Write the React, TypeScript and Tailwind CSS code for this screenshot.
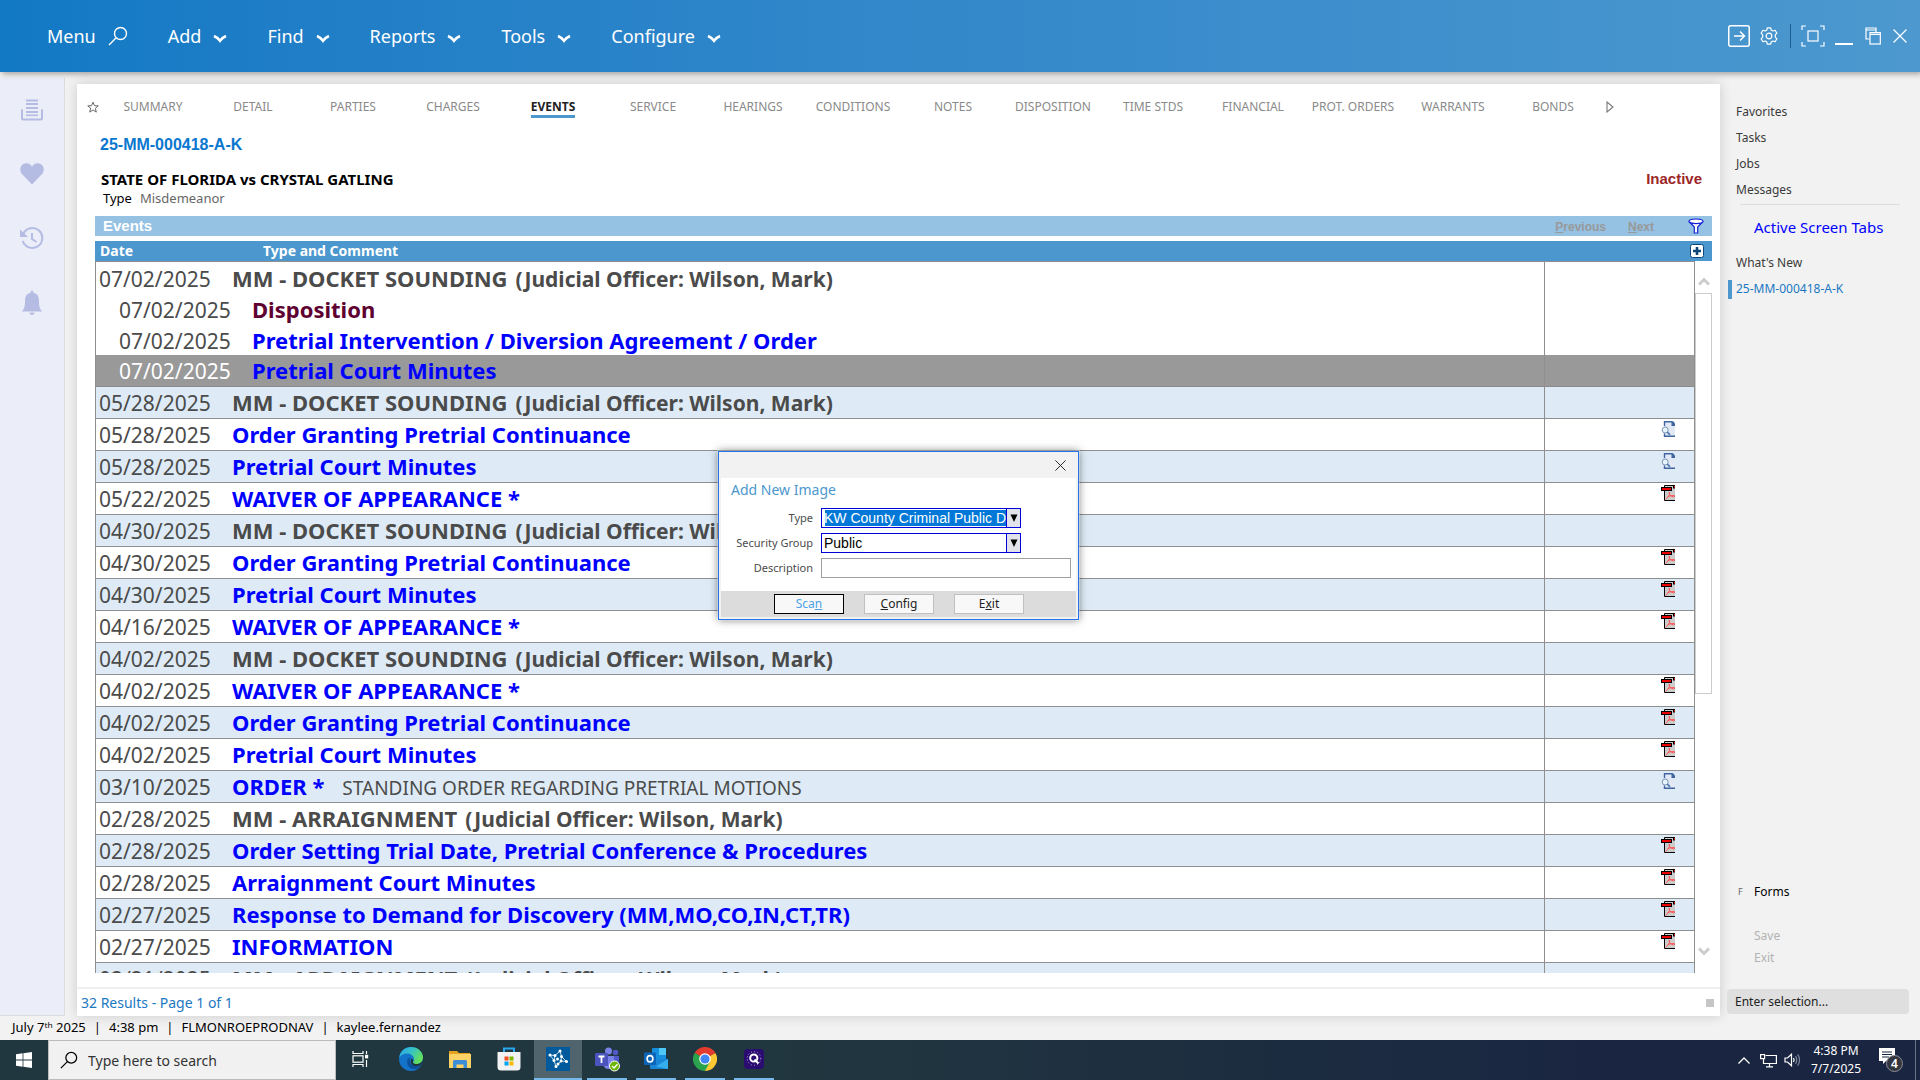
import type { ReactNode } from 'react';

type EventRow = {
  date: string;
  title: string;
  officer?: boolean;
  comment?: string;
  tone?: 'hearing' | 'disposition';
  child?: boolean;
  selected?: boolean;
  doc?: 'preview' | 'pdf';
};

const menus = ['Add', 'Find', 'Reports', 'Tools', 'Configure'];

const tabs = [
  'SUMMARY', 'DETAIL', 'PARTIES', 'CHARGES', 'EVENTS', 'SERVICE', 'HEARINGS', 'CONDITIONS',
  'NOTES', 'DISPOSITION', 'TIME STDS', 'FINANCIAL', 'PROT. ORDERS', 'WARRANTS', 'BONDS',
];

const events: EventRow[] = [
  { date: '07/02/2025', title: 'MM - DOCKET SOUNDING', officer: true, tone: 'hearing' },
  { date: '07/02/2025', title: 'Disposition', tone: 'disposition', child: true },
  { date: '07/02/2025', title: 'Pretrial Intervention / Diversion Agreement / Order', child: true },
  { date: '07/02/2025', title: 'Pretrial Court Minutes', child: true, selected: true },
  { date: '05/28/2025', title: 'MM - DOCKET SOUNDING', officer: true, tone: 'hearing' },
  { date: '05/28/2025', title: 'Order Granting Pretrial Continuance', doc: 'preview' },
  { date: '05/28/2025', title: 'Pretrial Court Minutes', doc: 'preview' },
  { date: '05/22/2025', title: 'WAIVER OF APPEARANCE *', doc: 'pdf' },
  { date: '04/30/2025', title: 'MM - DOCKET SOUNDING', officer: true, tone: 'hearing' },
  { date: '04/30/2025', title: 'Order Granting Pretrial Continuance', doc: 'pdf' },
  { date: '04/30/2025', title: 'Pretrial Court Minutes', doc: 'pdf' },
  { date: '04/16/2025', title: 'WAIVER OF APPEARANCE *', doc: 'pdf' },
  { date: '04/02/2025', title: 'MM - DOCKET SOUNDING', officer: true, tone: 'hearing' },
  { date: '04/02/2025', title: 'WAIVER OF APPEARANCE *', doc: 'pdf' },
  { date: '04/02/2025', title: 'Order Granting Pretrial Continuance', doc: 'pdf' },
  { date: '04/02/2025', title: 'Pretrial Court Minutes', doc: 'pdf' },
  { date: '03/10/2025', title: 'ORDER *', comment: 'STANDING ORDER REGARDING PRETRIAL MOTIONS', doc: 'preview' },
  { date: '02/28/2025', title: 'MM - ARRAIGNMENT', officer: true, tone: 'hearing' },
  { date: '02/28/2025', title: 'Order Setting Trial Date, Pretrial Conference & Procedures', doc: 'pdf' },
  { date: '02/28/2025', title: 'Arraignment Court Minutes', doc: 'pdf' },
  { date: '02/27/2025', title: 'Response to Demand for Discovery (MM,MO,CO,IN,CT,TR)', doc: 'pdf' },
  { date: '02/27/2025', title: 'INFORMATION', doc: 'pdf' },
  { date: '02/21/2025', title: 'MM - ARRAIGNMENT', officer: true, tone: 'hearing' },
];

function Chevron() {
  return (
    <svg viewBox="0 0 14 9" className="w-3.5 h-[9px] mt-1" fill="none" stroke="white" strokeWidth="2.6">
      <path d="M1 2 Q4.5 3.5 7 6.8 Q9.5 3.5 13 2" />
    </svg>
  );
}

function CloseIcon({ className }: { className: string }) {
  return (
    <svg viewBox="0 0 14 14" className={className} fill="none" stroke="currentColor" strokeWidth="1.2">
      <path d="M.5 .5 L13.5 13.5 M13.5 .5 L.5 13.5" />
    </svg>
  );
}

function Search({ className }: { className: string }) {
  return (
    <svg viewBox="0 0 20 20" className={className} fill="none" stroke="currentColor" strokeWidth="1.4">
      <circle cx="12.5" cy="7.5" r="6" />
      <path d="M8.2 11.8 L1 19" />
    </svg>
  );
}

function TopBar() {
  return (
    <header className="relative z-10 h-[72px] shrink-0 flex items-center justify-between pl-[47px] pr-[13px] bg-linear-to-r from-[#1279c5] to-[#4c98cf] text-white shadow-[2px_2px_6px_rgba(0,0,0,0.35)]">
      <nav className="flex items-center gap-10 text-[18px] leading-6">
        <button className="flex items-center gap-3">
          Menu
          <Search className="w-5 h-5" />
        </button>
        {menus.map((m) => (
          <button key={m} className="flex items-center gap-3">
            {m}
            <Chevron />
          </button>
        ))}
      </nav>
      <div className="flex items-center">
        <button aria-label="Go">
          <svg viewBox="0 0 22 22" className="w-[22px] h-[22px]" fill="none" stroke="white">
            <rect x=".75" y=".75" width="20.5" height="20.5" rx="2" strokeWidth="1.5" />
            <path d="M6 11 H16 M12 6.5 L16.5 11 L12 15.5" strokeWidth="1.5" />
          </svg>
        </button>
        <button aria-label="Settings" className="ml-2.5">
          <svg viewBox="0 0 18 18" className="w-[18px] h-[18px]" fill="none" stroke="white" strokeWidth="1.2" strokeLinejoin="round">
            <path d="M7.3 .8 H10.7 L11.2 3 L12.9 4 L15.1 3.3 L16.9 6.2 L15.3 7.8 V10.2 L16.9 11.8 L15.1 14.7 L12.9 14 L11.2 15 L10.7 17.2 H7.3 L6.8 15 L5.1 14 L2.9 14.7 L1.1 11.8 L2.7 10.2 V7.8 L1.1 6.2 L2.9 3.3 L5.1 4 L6.8 3 Z" />
            <circle cx="9" cy="9" r="2.8" />
          </svg>
        </button>
        <span className="w-px h-6 ml-3 mr-2.5 bg-[#1c5c92]" />
        <button aria-label="Focus">
          <svg viewBox="0 0 24 22" className="w-6 h-[22px]" fill="none" stroke="white" strokeWidth="1.2">
            <rect x="7" y="6" width="10" height="10" />
            <path d="M1 5 V1 H5 M19 1 H23 V5 M23 17 V21 H19 M5 21 H1 V17" />
          </svg>
        </button>
        <button aria-label="Minimize" className="ml-2.5">
          <svg viewBox="0 0 18 18" className="w-[18px] h-[18px]" fill="white">
            <rect x="0" y="16" width="18" height="2" />
          </svg>
        </button>
        <button aria-label="Restore" className="ml-3">
          <svg viewBox="0 0 16 18" className="w-4 h-[18px]" fill="none" stroke="white" strokeWidth="1.2">
            <path d="M4.5 12 H1 V1 H11 V5.5 M1 3 H11" />
            <rect x="5" y="5.6" width="10.3" height="11.4" />
            <path d="M5 7.4 H15" />
          </svg>
        </button>
        <button aria-label="Close" className="ml-3">
          <CloseIcon className="w-3.5 h-3.5" />
        </button>
      </div>
    </header>
  );
}

function SideRail() {
  return (
    <aside className="w-[65px] mt-1.5 shrink-0 flex flex-col items-center pt-5 gap-10 bg-[#ebedf8] border-r border-b border-[#dcdce0] text-[#b5bce3]">
      <button aria-label="Documents">
        <svg viewBox="0 0 24 24" className="w-6 h-6" fill="currentColor">
          <path d="M6 1.5h12v2H6zM6 5h12v2H6zM6 9h12v2H6zM6 13h12v2H6z" />
          <path d="M3 12.5 H2 V20 Q2 21.5 3.5 21.5 H20.5 Q22 21.5 22 20 V12.5 H21" fill="none" stroke="currentColor" strokeWidth="2" />
          <path d="M6 16.5h12v1.6H6z" />
        </svg>
      </button>
      <button aria-label="Favorites">
        <svg viewBox="0 0 24 22" className="w-6 h-6" fill="currentColor">
          <path d="M12 21.5 L2.4 11.6 C-.8 8.2 -.2 3.2 3 1.2 C6.2 -.6 10 .2 12 3.6 C14 .2 17.8 -.6 21 1.2 C24.2 3.2 24.8 8.2 21.6 11.6 Z" />
        </svg>
      </button>
      <button aria-label="History">
        <svg viewBox="0 0 24 24" className="w-6 h-6" fill="none" stroke="currentColor" strokeWidth="2">
          <path d="M3.4 7.5 A10 10 0 1 1 2.8 15" />
          <path d="M0 3.5 V11 H8 Z" fill="currentColor" stroke="none" />
          <path d="M12 7 V13 L16.5 16" />
        </svg>
      </button>
      <button aria-label="Notifications">
        <svg viewBox="0 0 24 26" className="w-6 h-[26px]" fill="currentColor">
          <path d="M12 .5 C11 .5 10.6 1.6 10.6 2.8 C6.6 3.6 5 7 5 10.5 C5 16 4.6 18.6 1.8 21.5 H22.2 C19.4 18.6 19 16 19 10.5 C19 7 17.4 3.6 13.4 2.8 C13.4 1.6 13 .5 12 .5 Z" />
          <path d="M9.5 22.6 H14.5 C14.3 24.2 13.3 25 12 25 C10.7 25 9.7 24.2 9.5 22.6 Z" />
        </svg>
      </button>
    </aside>
  );
}

function TabStrip() {
  return (
    <nav className="flex items-center h-6 mt-[11px] pl-[10px] text-[12px] leading-4 text-[#8a8a8a]">
      <svg viewBox="0 0 16 16" className="w-3 h-3 mr-1" fill="none" stroke="#666" strokeWidth="1.3">
        <path d="M8 1.5 L9.9 6.2 L15 6.5 L11.1 9.7 L12.4 14.8 L8 12 L3.6 14.8 L4.9 9.7 L1 6.5 L6.1 6.2 Z" />
      </svg>
      {tabs.map((t) => (
        <a key={t} href="#" className="flex w-[100px] justify-center whitespace-nowrap">
          <span className={t === 'EVENTS' ? 'font-bold text-[#222] border-b-3 border-[#4c98ce] mt-[3px]' : ''}>{t}</span>
        </a>
      ))}
      <svg viewBox="0 0 8 12" className="w-2 h-3 ml-[3px]" fill="none" stroke="#777" strokeWidth="1.1">
        <path d="M1 1 V11 L7 6 Z" />
      </svg>
    </nav>
  );
}

function PdfIcon() {
  return (
    <svg viewBox="0 0 14 16" className="w-3.5 h-4">
      <path d="M3.5 .5 H14 V15.5 H3.5 Z" fill="#ccc" />
      <path d="M14 .5 H3.5 V15.5 H14" fill="none" stroke="#000" />
      <rect x=".5" y="2.5" width="10" height="3" fill="#e00" stroke="#000" />
      <path d="M12 0 H14 V3.5 H12 Z" fill="#000" />
      <path d="M13 1 H14 V2.6 H13 Z" fill="#e00" />
      <path d="M4.5 14.5 C7 12.5 9 9.5 8.6 7.6 C8.4 6.6 7.4 7.6 8.6 9.6 C9.8 11.4 11.6 12 14 11.6 M6.5 12 C8.5 10.8 11 10.2 13.8 10.6" fill="none" stroke="#f55" />
    </svg>
  );
}

function PreviewIcon() {
  return (
    <svg viewBox="0 0 14 16" className="w-3.5 h-4">
      <path d="M3 .5 H14 V15.5 H3 Z" fill="#e3e8f5" />
      <path d="M3.5 5 V.8 H11.5 M3.5 12.5 V15.2 H14" fill="none" stroke="#3f66a0" strokeWidth="1.4" />
      <path d="M10.5 .2 H12 L14 2.4 V5 H10.5 Z" fill="#3f66a0" />
      <circle cx="4.2" cy="9" r="3" fill="#e8f4fb" stroke="#7b93b5" />
      <path d="M6.3 11 L9 14" stroke="#4f78b0" strokeWidth="1.8" />
    </svg>
  );
}

function titleColor(e: EventRow) {
  if (e.tone === 'hearing') return 'text-[#4b4b4b]';
  if (e.tone === 'disposition') return 'text-[#5e0030]';
  return 'text-[#0000ff]';
}

function rowColor(e: EventRow, i: number) {
  if (e.selected) return 'bg-[#999] text-white border-b border-[#8a8a8a]';
  if (i < 3) return 'bg-white';
  return i % 2 === 0 ? 'bg-[#deebf6] border-b border-[#8f8f8f]' : 'bg-white border-b border-[#8f8f8f]';
}

function EventTable() {
  return (
    <div className="flex flex-1 min-h-0 overflow-hidden">
      <div className="flex-1 overflow-hidden border-t border-l border-[#8f8f8f]">
        <table aria-label="Events" className="w-full table-fixed border-collapse">
          <tbody>
            {events.map((e, i) => (
              <tr key={i} className={`text-[21px] leading-[30px] text-[#4b4b4b] ${i < 4 ? 'h-[31px]' : 'h-8'} ${rowColor(e, i)}`}>
                <td className={`p-0 whitespace-nowrap overflow-hidden ${e.child ? 'pl-[23px]' : 'pl-[3px]'}`}>
                  <div className="flex items-baseline h-[30px]">
                    <span className={`w-[133px] ${e.selected ? 'text-white' : ''}`}>{e.date}</span>
                    <span className={`font-bold text-[22px] ${titleColor(e)}`}>{e.title}</span>
                    {e.officer && <span className="ml-2 font-bold">(Judicial Officer: Wilson, Mark)</span>}
                    {e.comment && <span className="ml-[18px] text-[19px]">{e.comment}</span>}
                  </div>
                </td>
                <td className="w-[150px] p-0 pr-[19px] border-x border-[#8f8f8f] align-top">
                  <div className="flex justify-end pt-0.5">
                    {e.doc === 'pdf' && <PdfIcon />}
                    {e.doc === 'preview' && <PreviewIcon />}
                  </div>
                </td>
              </tr>
            ))}
          </tbody>
        </table>
      </div>
      {/* Scroll bar */}
      <div className="w-[17px] flex flex-col items-center pt-4">
        <svg viewBox="0 0 12 9" className="w-3 h-[9px]" fill="none" stroke="#ccc" strokeWidth="3">
          <path d="M1 7.5 L6 2.5 L11 7.5" />
        </svg>
        <div className="w-full h-[401px] mt-[7px] bg-white border border-[#ccc]" />
        <svg viewBox="0 0 12 9" className="w-3 h-[9px] mt-auto mb-[17px]" fill="none" stroke="#ccc" strokeWidth="3">
          <path d="M1 1.5 L6 6.5 L11 1.5" />
        </svg>
      </div>
    </div>
  );
}

function CasePanel() {
  return (
    <main className="flex-1 min-w-0 flex flex-col mt-3 ml-3 bg-white shadow-[0_0_12px_rgba(0,0,0,0.16)]">
      <TabStrip />
      <div className="mt-[17px] pl-[23px] font-['Liberation_Sans',Arial,sans-serif] font-bold text-[16px] leading-[18px] text-[#0a77cf]">
        25-MM-000418-A-K
      </div>
      <div className="flex justify-between mt-[17px] pl-6 pr-[18px] font-bold leading-4">
        <h1 className="text-[15px] text-black">STATE OF FLORIDA vs CRYSTAL GATLING</h1>
        <span className="font-['Liberation_Sans',Arial,sans-serif] text-[15px] text-[#9d2727]">Inactive</span>
      </div>
      <div className="pl-[26px] mt-px flex gap-2 text-[13px] leading-5 text-[#666]">
        <span className="text-black">Type</span>Misdemeanor
      </div>

      <section className="flex-1 min-h-0 flex flex-col mt-2 ml-[18px] mr-2">
        <div className="h-5 flex items-center justify-between pl-2 pr-2 bg-[#95c1e3] font-['Liberation_Sans',Arial,sans-serif] font-bold">
          <h2 className="text-[15px] leading-5 text-white">Events</h2>
          <div className="flex items-center text-[12px] leading-5 text-[#999] text-shadow-[1px_1px_0_#fff]">
            <button className="mr-[22px] pt-0.5"><u>P</u>revious</button>
            <button className="mr-[34px] pt-0.5"><u>N</u>ext</button>
            <button aria-label="Filter">
              <svg viewBox="0 0 16 16" className="w-4 h-4" fill="#fff" stroke="#1322d6" strokeWidth="1.2">
                <path d="M1 3.5 L6.3 9 V15 H9.7 V9 L15 3.5" />
                <ellipse cx="8" cy="3.3" rx="7" ry="2.3" />
              </svg>
            </button>
          </div>
        </div>
        <div className="h-5 mt-[5px] flex items-center bg-[#4c98ce] pl-[5px] pr-2 font-bold text-[14px] leading-5 text-white">
          <span className="w-[163px]">Date</span>
          <span className="flex-1">Type and Comment</span>
          <button aria-label="Add event">
            <svg viewBox="0 0 14 14" className="w-3.5 h-3.5">
              <rect x=".5" y=".5" width="13" height="13" rx="2" fill="#fff" stroke="#0d4676" />
              <path d="M7 3 V11 M3 7 H11" stroke="#0d4676" strokeWidth="2.6" />
            </svg>
          </button>
        </div>
        <EventTable />
      </section>

      <footer className="h-[29px] mt-3.5 pl-1 pr-1.5 flex items-center justify-between border-t-2 border-[#f0f0f0] text-[14px] leading-5 text-[#1b78c2]">
        32 Results - Page 1 of 1
        <span className="w-2 h-2 bg-[#c6c6c6]" />
      </footer>
    </main>
  );
}

function RightPanel() {
  return (
    <aside className="w-[200px] shrink-0 flex flex-col pt-[27px] text-[12px] text-[#3a3a3a]">
      <ul className="pl-4 leading-[26px]">
        {['Favorites', 'Tasks', 'Jobs', 'Messages'].map((x) => (
          <li key={x}><a href="#">{x}</a></li>
        ))}
      </ul>
      <hr className="mt-px ml-5 mr-5 border-[#dcdcdc]" />
      <h2 className="mt-2.5 pl-[34px] text-[15px] leading-6 text-[#0000ff]">Active Screen Tabs</h2>
      <ul className="mt-[11px] leading-[26px]">
        <li className="pl-4"><a href="#">What's New</a></li>
        <li className="pl-2 flex items-center">
          <span className="w-1 h-[19px] mr-1 bg-[#4c98ce]" />
          <a href="#" className="text-[#1b78c2]">25-MM-000418-A-K</a>
        </li>
      </ul>
      <div className="mt-auto pl-[18px] flex items-center leading-[22px] text-black">
        <span className="w-4 text-[9px] text-[#666]">F</span>Forms
      </div>
      <ul className="mt-[22px] pl-[34px] leading-[22px] text-[#b3b3b3]">
        <li>Save</li>
        <li>Exit</li>
      </ul>
      <input
        aria-label="Enter selection"
        placeholder="Enter selection..."
        className="mt-5 mb-0.5 ml-[7px] mr-[11px] h-[25px] px-2 rounded bg-[#dfdfdf] leading-5 placeholder:text-[#222] placeholder:opacity-100"
      />
    </aside>
  );
}

const field = 'w-full h-5 pl-0.5 border appearance-none font-[\'Liberation_Sans\',Arial,sans-serif] text-[14px] leading-[18px] outline-none';

function Combo({ id, value, active }: { id: string; value: string; active?: boolean }) {
  return (
    <div className="relative w-[200px] h-5">
      <select
        id={id}
        className={`${field} border-[#0000dd] ${active ? 'bg-[#0078d7] text-white shadow-[inset_0_0_0_1px_#fff,inset_2px_0_0_1px_#fff]' : 'bg-white text-black'}`}
      >
        <option>{value}</option>
      </select>
      <span className="absolute right-0 top-0 w-[15px] h-5 flex items-center justify-center border border-[#0000dd] bg-[#e2e2ea] pointer-events-none">
        <svg viewBox="0 0 8 8" className="w-2 h-2"><path d="M.5 .5 H7.5 L4 8 Z" /></svg>
      </span>
    </div>
  );
}

function AddImageDialog() {
  return (
    <div role="dialog" aria-label="Add New Image" className="absolute left-1/2 top-[451px] -ml-[242px] w-[361px] z-20 border border-[#2672e8] bg-[#f2f2f2] px-0.5 pb-0.5 shadow-[0_0_8px_rgba(0,0,0,0.5)] outline outline-white/30">
      <div className="h-[26px] flex items-center justify-end pr-[10px] text-[#222]">
        <button aria-label="Close"><CloseIcon className="w-[11px] h-[11px]" /></button>
      </div>
      <div className="bg-white pl-[10px] pr-[5px] pt-0.5 pb-[13px]">
        <h2 className="text-[14px] leading-5 text-[#4c98ce]">Add New Image</h2>
        <form className="mt-2 grid grid-cols-[82px_1fr] gap-x-2 gap-y-[5px] text-[11px] leading-5 text-[#4b4b4b]">
          <label htmlFor="img-type" className="text-right">Type</label>
          <Combo id="img-type" value="KW County Criminal Public Document" active />
          <label htmlFor="img-group" className="text-right whitespace-nowrap">Security Group</label>
          <Combo id="img-group" value="Public" />
          <label htmlFor="img-desc" className="text-right">Description</label>
          <input id="img-desc" type="text" className={`${field} border-[#a0a0a0] bg-white text-black`} />
        </form>
      </div>
      <div className="h-[26px] flex items-center justify-center gap-5 pl-px bg-[#dcdcdc] text-[12px] leading-4 text-[#222]">
        <button className="w-[70px] h-5 bg-[#f8f8f8] border border-black text-[#4ca3e8]">Sca<u>n</u></button>
        <button className="w-[70px] h-5 bg-[#f8f8f8] border border-[#c0c0c0]"><u>C</u>onfig</button>
        <button className="w-[70px] h-5 bg-[#f8f8f8] border border-[#c0c0c0]">E<u>x</u>it</button>
      </div>
    </div>
  );
}

function TaskButton({ label, state, children }: { label: string; state?: 'open' | 'active'; children: ReactNode }) {
  return (
    <button
      aria-label={label}
      className={`w-12 h-10 flex flex-col items-center ${state === 'active' ? 'bg-[#4f646c]' : ''}`}
    >
      <span className="h-[38px] flex items-center">{children}</span>
      {state && <span className={`h-0.5 bg-[#76b9ed] ${state === 'active' ? 'w-12' : 'w-10'}`} />}
    </button>
  );
}

function Taskbar() {
  return (
    <div className="h-10 shrink-0 flex bg-linear-to-r from-[#21373f] from-40% to-[#1a2541] to-85% text-white">
      <button aria-label="Start" className="w-12 flex items-center justify-center">
        <svg viewBox="0 0 16 16" className="w-4 h-4" fill="white">
          <path d="M0 2.2 L6.6 1.3 V7.6 H0Z M7.4 1.2 L16 0 V7.6 H7.4Z M0 8.4 H6.6 V14.7 L0 13.8Z M7.4 8.4 H16 V16 L7.4 14.8Z" />
        </svg>
      </button>
      <label className="w-72 flex items-center pl-[11px] gap-2.5 bg-[#f1f1f1] border border-[#bcbcbc] text-black">
        <Search className="w-[18px] h-[18px]" />
        <input
          aria-label="Search"
          placeholder="Type here to search"
          className="flex-1 min-w-0 pt-0.5 text-[14px] leading-5 placeholder:text-[#333] placeholder:opacity-100"
        />
      </label>
      <div className="flex gap-px">
        <TaskButton label="Task View">
          <svg viewBox="0 0 17 16" className="w-[17px] h-4" fill="none" stroke="white" strokeWidth="1.2">
            <path d="M1 0 V2.5 H11 V0 M1 16 V13.5 H11 V16" />
            <rect x="1" y="4.8" width="10" height="6.4" />
            <path d="M14.5 0 V3 M14.5 9 V16" />
            <rect x="13.6" y="4.4" width="2" height="2.4" fill="white" />
          </svg>
        </TaskButton>
        <TaskButton label="Edge">
          <svg viewBox="0 0 24 24" className="w-6 h-6 ml-[3px]">
            <defs>
              <linearGradient id="edgeTop" x1="0" y1="0" x2="1" y2=".5">
                <stop offset="0" stopColor="#2aa5e8" />
                <stop offset=".5" stopColor="#35c1c9" />
                <stop offset="1" stopColor="#64e05a" />
              </linearGradient>
            </defs>
            <circle cx="12" cy="12" r="12" fill="#1373c9" />
            <path d="M.2 10.5 C1.5 4 6 0 12 0 C19 0 24 5 24 10.5 C24 15 20.5 17 17.5 17 C15 17 13.8 16 14 15 C14.8 14.2 15.2 13 15 11.8 C14.5 8.5 11.5 6.5 8 6.5 C4.5 6.5 1.6 8.2 .2 10.5 Z" fill="url(#edgeTop)" />
            <path d="M9 11.5 C6.5 15.5 9.5 22.5 16 22 C19 21.6 21.2 19.8 22.4 18 C19 20 14 19.5 12 17 C10.6 15.2 10.5 13 11.5 11 Z" fill="#0c4f9a" />
            <path d="M14 15 C13.8 16 15 17 17.5 17 C20.5 17 24 15 24 11.5 C24.2 14 23.6 16.2 22.4 18 C19.5 19.6 15 19.5 12.8 17.5 C11.5 15.8 11.4 13.2 12.5 11.4 C14 12 14.8 13.5 14 15 Z" fill="#21373f" />
          </svg>
        </TaskButton>
        <TaskButton label="File Explorer">
          <svg viewBox="0 0 22 19" className="w-[22px] h-[19px] ml-1">
            <path d="M0 1 H8 L10 3 H21 V18 H0 Z" fill="#e6a21c" />
            <path d="M0 4 H22 V18 H0 Z" fill="#fbd367" />
            <path d="M4 18 V11.5 Q4 10 5.5 10 H16.5 Q18 10 18 11.5 V18 H14.5 V14.5 H7.5 V18 Z" fill="#3c8fd6" />
          </svg>
        </TaskButton>
        <TaskButton label="Store">
          <svg viewBox="0 0 24 24" className="w-6 h-6 ml-1">
            <path d="M7 6 V1.5 H17 V6" fill="none" stroke="#2aa8ef" strokeWidth="2" />
            <path d="M.5 5 H23.5 V20 Q23.5 23.5 20 23.5 H4 Q.5 23.5 .5 20 Z" fill="#f2f2f2" />
            <path d="M7.5 9.5 h4v4h-4z" fill="#f25022" />
            <path d="M12.5 9.5 h4v4h-4z" fill="#7fba00" />
            <path d="M7.5 14.5 h4v4h-4z" fill="#00a4ef" />
            <path d="M12.5 14.5 h4v4h-4z" fill="#ffb900" />
          </svg>
        </TaskButton>
        <span className="w-px" />
        <TaskButton label="Case Manager" state="active">
          <svg viewBox="0 0 24 24" className="w-6 h-6" fill="white" stroke="white">
            <rect width="24" height="24" fill="#005a9c" stroke="none" />
            <path d="M4 8 L9 8.5 L14 4 L15.5 9.5 L20.5 14.5 L15 14 L10 19.5 L8 13.5 L4 8 M9 8.5 L8 13.5 M15.5 9.5 L15 14" strokeWidth=".8" fill="none" />
            {[[4, 8], [9, 8.5], [14, 4], [15.5, 9.5], [20.5, 14.5], [15, 14], [10, 19.5], [8, 13.5], [11.5, 12], [12, 17]].map(([x, y]) => (
              <circle key={`${x}-${y}`} cx={x} cy={y} r="1.5" stroke="none" />
            ))}
          </svg>
        </TaskButton>
        <TaskButton label="Teams" state="open">
          <svg viewBox="0 0 25 25" className="w-[25px] h-[25px]">
            <circle cx="20.5" cy="5.5" r="2.7" fill="#5059c9" />
            <circle cx="13.5" cy="4" r="3.5" fill="#7b83eb" />
            <path d="M16 9 H24 V16 Q24 19 20 19 H16 Z" fill="#5059c9" />
            <path d="M8 9 H19 V17 Q18 22 13.5 22 Q9 22 8 17 Z" fill="#7b83eb" />
            <rect x="0" y="6" width="13" height="13" rx="1" fill="#4b53bc" />
            <path d="M3.5 9.5 H9.5 M6.5 9.5 V16" stroke="white" strokeWidth="1.8" />
            <circle cx="19.5" cy="19" r="5" fill="#6bb700" stroke="white" />
            <path d="M17 19 L19 21 L22.5 17.2" fill="none" stroke="white" strokeWidth="1.4" />
          </svg>
        </TaskButton>
        <TaskButton label="Outlook" state="open">
          <svg viewBox="0 0 24 22" className="w-6 h-[22px]">
            <rect x="8" y="0" width="14" height="14" rx="1" fill="#1490df" />
            <path d="M15 0 H21 Q22 0 22 1 V7 H15 Z" fill="#50c8f5" />
            <path d="M6 11 H24 V20 Q24 21 23 21 H7 Q6 21 6 20 Z" fill="#1a86d8" />
            <path d="M24 11 L12 18.5 L24 21 Z" fill="#35aef0" />
            <rect x="0" y="4.5" width="12" height="12.5" rx="1" fill="#0a64b8" />
            <ellipse cx="6" cy="10.8" rx="2.9" ry="3.2" fill="none" stroke="white" strokeWidth="1.6" />
          </svg>
        </TaskButton>
        <TaskButton label="Chrome" state="open">
          <svg viewBox="0 0 24 24" className="w-6 h-6">
            <path d="M12 12 L1.6 6 A12 12 0 0 1 22.4 6 Z" fill="#e33b2e" />
            <path d="M12 12 L22.4 6 A12 12 0 0 1 12 24 L12 12 Z" fill="#fcc934" />
            <path d="M12 12 L12 24 A12 12 0 0 1 1.6 6 Z" fill="#2ba24c" />
            <path d="M12 6.5 H22.6 L21 4 H12 Z" fill="#e33b2e" />
            <path d="M7.2 14.8 L1.6 6 L5 8 Z M7.2 14.8 L12 24 L17 14.5 Z" fill="#2ba24c" />
            <circle cx="12" cy="12" r="5.8" fill="white" />
            <circle cx="12" cy="12" r="4.6" fill="#4285f4" />
          </svg>
        </TaskButton>
        <TaskButton label="Q Assistant" state="open">
          <svg viewBox="0 0 20 20" className="w-5 h-5">
            <rect width="20" height="20" rx="4" fill="#2b0c70" />
            <circle cx="10" cy="9.5" r="6.8" fill="none" stroke="#b9a5e6" strokeDasharray="1 2.2" />
            <circle cx="9.8" cy="9" r="3.6" fill="none" stroke="white" strokeWidth="2" />
            <path d="M10.5 10.5 L14.5 14.5" stroke="white" strokeWidth="2" />
          </svg>
        </TaskButton>
      </div>

      <div className="ml-auto flex items-center">
        <svg viewBox="0 0 12 7" className="w-3 h-[7px]" fill="none" stroke="white" strokeWidth="1.3">
          <path d="M.5 6.5 L6 1 L11.5 6.5" />
        </svg>
        <svg viewBox="0 0 17 15" className="w-[17px] h-[15px] ml-2.5" fill="none" stroke="white" strokeWidth="1.2">
          <path d="M5.5 2.5 H16.4 V10.5 H3.5 V6 M9.5 10.5 V13.5 M6 13.8 H13" />
          <rect x=".6" y="1.6" width="4" height="4" />
        </svg>
        <svg viewBox="0 0 17 14" className="w-[17px] h-3.5 ml-[7px]" fill="none" stroke="white" strokeWidth="1.2">
          <path d="M1 5 H3.5 L7.5 1.2 V12.8 L3.5 9 H1 Z" />
          <path d="M9.5 5 Q10.8 7 9.5 9" />
          <path d="M11.5 3.2 Q14 7 11.5 10.8 M13.7 1.4 Q17.4 7 13.7 12.6" stroke="#7c859a" />
        </svg>
        <div className="w-[70px] text-center text-[12px] leading-[18px]">
          <div>4:38 PM</div>
          <div>7/7/2025</div>
        </div>
        <button aria-label="Notifications" className="relative w-6 h-6 ml-2 mr-3">
          <svg viewBox="0 0 24 24" className="w-6 h-6">
            <path d="M0 0 H16 V13 H7 L4 16 V13 H0 Z" fill="white" />
            <path d="M3 4 H13 M3 6.5 H13 M3 9 H10" stroke="#1a2541" />
          </svg>
          <span className="absolute left-[7px] top-[7px] w-[17px] h-[17px] rounded-full border border-[#8a8d96] bg-[#33363f] text-[12px] leading-[15px] text-center font-semibold">4</span>
        </button>
        <span className="w-px h-10 mr-1 bg-[#6d7387]" />
      </div>
    </div>
  );
}

export default function App() {
  return (
    <div className="relative h-screen flex flex-col overflow-hidden bg-[#f2f2f2] font-['Noto_Sans','Open_Sans',sans-serif]">
      <TopBar />
      <div className="flex flex-1 min-h-0">
        <SideRail />
        <CasePanel />
        <RightPanel />
      </div>
      <div className="h-6 shrink-0 flex items-center gap-2 pl-3 pb-0.5 text-[13px] leading-5 text-black">
        <span>July 7ᵗʰ 2025</span>|<span>4:38 pm</span>|<span>FLMONROEPRODNAV</span>|<span>kaylee.fernandez</span>
      </div>
      <Taskbar />
      <AddImageDialog />
    </div>
  );
}
